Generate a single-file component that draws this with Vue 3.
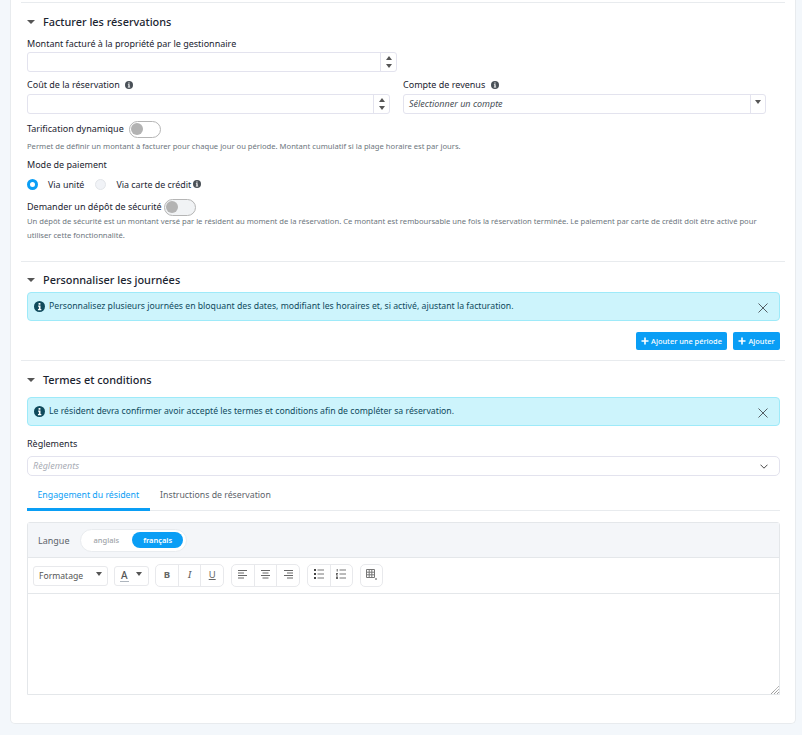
<script setup>
const infoPath = 'M3.300 1.500h1.300v1.100H3.300zM2.900 3.300h1.700v2.400h.6v.8H2.800v-.8h.6V4.100h-.5z'
const alignRows = [
  'M0 .5h9M0 3h6M0 5.500h9M0 8h6',
  'M0 .5h9M1.500 3h6M0 5.500h9M1.500 8h6',
  'M0 .5h9M3 3h6M0 5.500h9M3 8h6'
]
</script>

<template>
  <div class="page">
    <main class="card">
      <section class="section first">
        <h2 class="heading"><span class="caret"></span>Facturer les réservations</h2>
        <label class="label l1">Montant facturé à la propriété par le gestionnaire</label>
        <div class="number full">
          <span class="spin"><i class="up"></i><i class="down"></i></span>
        </div>
        <div class="two">
          <div class="col">
            <label class="label">Coût de la réservation <span class="info gap"><svg viewBox="0 0 8 8"><circle cx="4" cy="4" r="4" fill="#495057"/><path :d="infoPath" fill="#fff"/></svg></span></label>
            <div class="number"><span class="spin"><i class="up"></i><i class="down"></i></span></div>
          </div>
          <div class="col">
            <label class="label">Compte de revenus <span class="info gap"><svg viewBox="0 0 8 8"><circle cx="4" cy="4" r="4" fill="#495057"/><path :d="infoPath" fill="#fff"/></svg></span></label>
            <div class="number select"><em>Sélectionner un compte</em><span class="spin selbtn"><i class="down"></i></span></div>
          </div>
        </div>
        <div class="switch-row r1"><span class="label">Tarification dynamique</span><span class="switch"><b></b></span></div>
        <p class="help h1">Permet de définir un montant à facturer pour chaque jour ou période. Montant cumulatif si la plage horaire est par jours.</p>
        <div class="label mode">Mode de paiement</div>
        <div class="radios">
          <span class="radio on"></span><span class="rlabel">Via unité</span>
          <span class="radio off"></span><span class="rlabel">Via carte de crédit</span>
          <span class="info"><svg viewBox="0 0 8 8"><circle cx="4" cy="4" r="4" fill="#495057"/><path :d="infoPath" fill="#fff"/></svg></span>
        </div>
        <div class="switch-row r2"><span class="label">Demander un dépôt de sécurité</span><span class="switch tight"><b></b></span></div>
        <p class="help h2">Un dépôt de sécurité est un montant versé par le résident au moment de la réservation. Ce montant est remboursable une fois la réservation terminée. Le paiement par carte de crédit doit être activé pour utiliser cette fonctionnalité.</p>
      </section>

      <section class="section second">
        <h2 class="heading"><span class="caret"></span>Personnaliser les journées</h2>
        <div class="alert a1">
          <svg class="ai" viewBox="0 0 12 12"><circle cx="6" cy="6" r="6" fill="#0f4a5c"/><path d="M5 2.300h2v1.800H5zM4.500 5h2.600v3.700H8V10H4.300V8.700h1V6.300h-.8z" fill="#fff"/></svg>
          <span>Personnalisez plusieurs journées en bloquant des dates, modifiant les horaires et, si activé, ajustant la facturation.</span>
          <svg class="ax" viewBox="0 0 10 10"><path d="M.5.5l9 9M9.500.5l-9 9" stroke="#555f66" stroke-width="1" fill="none"/></svg>
        </div>
        <div class="buttons">
          <button class="btn wide"><svg class="plus" viewBox="0 0 8 8"><path d="M4 .5v7M.5 4h7" stroke="#fff" stroke-width="1.600"/></svg>Ajouter une période</button>
          <button class="btn narrow"><svg class="plus" viewBox="0 0 8 8"><path d="M4 .5v7M.5 4h7" stroke="#fff" stroke-width="1.600"/></svg>Ajouter</button>
        </div>
      </section>

      <section class="section third">
        <h2 class="heading"><span class="caret"></span>Termes et conditions</h2>
        <div class="alert a2">
          <svg class="ai" viewBox="0 0 12 12"><circle cx="6" cy="6" r="6" fill="#0f4a5c"/><path d="M5 2.300h2v1.800H5zM4.500 5h2.600v3.700H8V10H4.300V8.700h1V6.300h-.8z" fill="#fff"/></svg>
          <span>Le résident devra confirmer avoir accepté les termes et conditions afin de compléter sa réservation.</span>
          <svg class="ax" viewBox="0 0 10 10"><path d="M.5.5l9 9M9.500.5l-9 9" stroke="#555f66" stroke-width="1" fill="none"/></svg>
        </div>
        <label class="label reg">Règlements</label>
        <div class="combo">
          <em>Règlements</em>
          <svg viewBox="0 0 8 5"><path d="M.5.700L4 4.200 7.500.7" stroke="#333" stroke-width=".9" fill="none"/></svg>
        </div>
        <nav class="tabs">
          <a class="tab active">Engagement du résident</a>
          <a class="tab">Instructions de réservation</a>
        </nav>
        <div class="editor">
          <div class="lang">
            <span class="langlabel">Langue</span>
            <span class="pill"><span class="opt">anglais</span><span class="opt sel">français</span></span>
          </div>
          <div class="toolbar">
            <span class="tbtn fmt">Formatage<i class="down dk"></i></span>
            <span class="tbtn color"><span class="a">A</span><i class="down dk"></i></span>
            <span class="group w3">
              <span class="cell"><b>B</b></span>
              <span class="cell"><i class="it">I</i></span>
              <span class="cell"><u>U</u></span>
            </span>
            <span class="group w3">
              <span v-for="(r, i) in alignRows" :key="i" class="cell"><svg viewBox="0 0 9 9" width="9" height="9"><path :d="r" stroke="#666" stroke-width="1" fill="none"/></svg></span>
            </span>
            <span class="group w2">
              <span class="cell"><svg viewBox="0 0 10 10" width="10" height="10"><path d="M3.500 1h6.500M3.500 5h6.500M3.500 9h6.500" stroke="#777" fill="none"/><path d="M0 0h2v2H0zM0 4h2v2H0zM0 8h2v2H0z" fill="#444"/></svg></span>
              <span class="cell"><svg viewBox="0 0 10 10" width="10" height="10"><path d="M3.500 1h6.500M3.500 5h6.500M3.500 9h6.500" stroke="#777" fill="none"/><path d="M.7 0h1v2.500h-1zM0 4h2v1H1v.5h1v1H0zM0 7.500h2V10H0z" fill="#666"/></svg></span>
            </span>
            <span class="group w1">
              <span class="cell"><svg viewBox="0 0 11 11" width="11" height="11"><path d="M.5.5h8v8h-8zM.5 3.200h8M.5 5.800h8M3.200.5v8M5.800.5v8" stroke="#777" fill="none"/><path d="M9 9h2v2H9z" fill="#aaa"/></svg></span>
            </span>
          </div>
          <div class="body">
            <svg class="grip" viewBox="0 0 8 8"><path d="M0 8l8-8M3 8l5-5M6 8l2-2" stroke="#555" stroke-width=".8" stroke-dasharray="1 .6" fill="none"/></svg>
          </div>
        </div>
      </section>
    </main>
  </div>
</template>

<style>
html, body { margin: 0; background: #f3f7fb; }
</style>

<style scoped>
.page { width: 802px; height: 735px; overflow: hidden; background: #f3f7fb; font-family: "Noto Sans", "Open Sans", sans-serif; color: #1d2733; }
.card { box-sizing: border-box; margin-left: 10px; width: 786px; height: 724px; background: #fff; border: 1px solid #e8ebee; border-top: 0; border-radius: 0 0 5px 5px; padding: 2px 10px 0; }
.section { border-top: 1px solid #e8ebee; padding: 0 5px 0 6px; box-sizing: border-box; margin: 0; }
.first { height: 259px; padding-top: 10px; }
.second { height: 99px; padding-top: 9px; }
.third { padding-top: 10px; }
.heading { margin: 0; font-size: 10.900px; line-height: 18px; font-weight: 500; color: #1b2430; display: flex; align-items: center; }
.caret { width: 0; height: 0; border: 4px solid transparent; border-top: 4px solid #555; border-bottom: 0; margin: 0 8px 0 0; }
.label { font-size: 9px; line-height: 14px; font-weight: 400; color: #1b2430; display: block; }
.l1 { margin-top: 6px; }
.number { position: relative; box-sizing: border-box; height: 20px; margin-top: 1px; border: 1px solid #e3e3ee; border-radius: 3px; background: #fff; width: 363px; }
.number.full { width: 370px; margin-top: 1px; }
.spin { position: absolute; right: 0; top: 0; bottom: 0; width: 15px; border-left: 1px solid #e3e3ee; display: flex; flex-direction: column; align-items: center; justify-content: center; gap: 4px; }
.up { width: 0; height: 0; border: 3px solid transparent; border-top: 0; border-bottom: 4px solid #555; }
.down { width: 0; height: 0; border: 3px solid transparent; border-bottom: 0; border-top: 4px solid #555; }
.two { display: flex; gap: 13px; margin-top: 6px; }
.col .label { height: 15px; }
.col .number { margin-top: 1px; }
.info { display: inline-block; width: 8px; height: 8px; vertical-align: -1px; }
.info svg { display: block; width: 8px; height: 8px; }
.gap { margin-left: 3px; }
.select em { font-size: 9px; line-height: 17px; color: #495057; padding-left: 5px; display: block; }
.selbtn { justify-content: flex-start; padding-top: 5px; box-sizing: border-box; }
.switch-row { display: flex; align-items: center; }
.r1 { margin-top: 6px; height: 18px; }
.r2 { margin-top: 7px; height: 18px; }
.switch { box-sizing: border-box; width: 32px; height: 17px; margin-left: 5px; border: 1px solid #b5b5b5; border-radius: 9px; background: #fff; position: relative; }
.switch b { position: absolute; left: 1.500px; top: 1.500px; width: 12px; height: 12px; border-radius: 50%; background: #b3b3b3; }
.switch.tight { margin-left: 2px; background: #f1f3f5; }
.help { margin: 0; font-size: 7.630px; line-height: 14px; color: #6c757d; }
.h1 { margin-top: 1px; }
.h2 { margin-top: -2px; width: 740px; }
.mode { margin-top: 5px; }
.radios { display: flex; align-items: center; height: 14px; margin-top: 5px; font-size: 8.900px; }
.radio { box-sizing: border-box; width: 11px; height: 11px; border-radius: 50%; flex: none; }
.radio.on { border: 3.500px solid #0a9ef5; background: #fff; }
.radio.off { background: #f1f3f7; border: 1px solid #e3e6ea; margin-left: 11px; }
.rlabel { margin-left: 10px; }
.radios .info { margin-left: 2px; }
.alert { box-sizing: border-box; height: 29px; margin-top: 3px; background: #cdf4fc; border: 1px solid #9eeaf9; border-radius: 4px; display: flex; align-items: center; font-size: 8.700px; color: #0f4a5c; padding: 0 11px 2px 6px; position: relative; }
.a2 { margin-top: 8px; }
.ai { width: 11px; height: 11px; margin-right: 4px; flex: none; position: relative; top: 1px; }
.ax { width: 10px; height: 10px; margin-left: auto; position: relative; top: 2px; }
.buttons { display: flex; justify-content: flex-end; gap: 6px; margin-top: 11px; }
.btn { box-sizing: border-box; height: 18px; border: 0; border-radius: 2px; background: #0a9ef5; color: #fff; font: 500 7.400px/18px "Noto Sans", sans-serif; padding: 0; display: flex; align-items: center; justify-content: center; }
.btn.wide { width: 91px; }
.btn.narrow { width: 47px; }
.plus { width: 8px; height: 8px; margin-right: 2px; }
.reg { margin-top: 11px; }
.combo { box-sizing: border-box; height: 20px; margin-top: 5px; border: 1px solid #e3e3ee; border-radius: 5px; display: flex; align-items: center; justify-content: space-between; padding: 0 11px 0 5px; }
.combo em { font-size: 9px; color: #a9adb5; position: relative; top: -1px; }
.combo svg { width: 8px; height: 5px; }
.tabs { display: flex; margin-top: 9px; height: 25px; border-bottom: 1px solid #e8ebee; }
.tab { box-sizing: border-box; padding: 3px 10.500px 0; height: 25px; font-size: 8.750px; line-height: 14px; color: #5c636a; }
.tab.active { color: #0a9ef5; border-bottom: 3px solid #0a9ef5; height: 26px; }
.editor { margin-top: 11px; border: 1px solid #e4e7ea; border-radius: 3px 3px 0 0; box-sizing: border-box; height: 173px; display: flex; flex-direction: column; }
.lang { height: 35px; flex: none; box-sizing: border-box; background: #f4f6f9; border-bottom: 1px solid #e4e7ea; display: flex; align-items: center; padding-left: 10px; }
.langlabel { font-size: 9px; color: #5c636a; margin-right: 10px; }
.pill { display: flex; align-items: center; box-sizing: border-box; height: 23px; background: #fff; border: 1px solid #e9ecef; border-radius: 12px; padding: 0 3px 0 13px; }
.opt { font-size: 7.500px; color: #a0a4a9; font-weight: 500; }
.opt.sel { margin-left: 13px; background: #0a9ef5; color: #fff; height: 16px; line-height: 16px; padding: 0 11px; border-radius: 8px; font-weight: 600; }
.toolbar { height: 36px; flex: none; box-sizing: border-box; border-bottom: 1px solid #e4e7ea; display: flex; align-items: center; padding: 0 0 0 5px; gap: 6px; }
.tbtn, .group { box-sizing: border-box; height: 20px; border: 1px solid #e8e9ec; border-radius: 3px; display: flex; align-items: center; background: #fff; }
.group { height: 23px; border-radius: 5px; }
.w3 { width: 69px; }
.w2 { width: 46px; }
.w1 { width: 23px; }
.group + .group { margin-left: 1px; }
.fmt { width: 75px; padding: 0 5px 0 5px; font-size: 8.600px; color: #555; justify-content: space-between; }
.dk { position: relative; top: -2px; }
.color { width: 35px; padding: 0 6px 0 5px; justify-content: space-between; font-size: 10px; font-weight: 500; color: #555; }
.color .a { border-bottom: 1px solid #adb5bd; line-height: 12px; padding: 0 1px; }
.cell { flex: 1; height: 100%; display: flex; align-items: center; justify-content: center; border-left: 1px solid #e8e9ec; font-size: 9.500px; color: #666; box-sizing: border-box; padding-bottom: 3px; }
.cell:first-child { border-left: 0; }
.it { font-style: italic; font-weight: 500; }
.body { flex: 1; position: relative; }
.grip { position: absolute; right: 0; bottom: 0; width: 8px; height: 8px; }
</style>
